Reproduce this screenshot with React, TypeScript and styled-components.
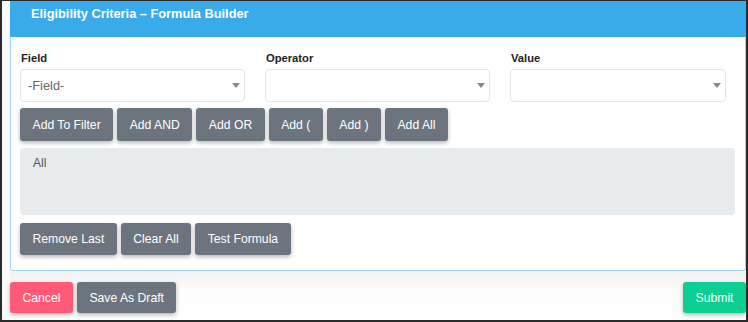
import React from "react";
import styled, { createGlobalStyle } from "styled-components";

const Global = createGlobalStyle`
  html, body { margin: 0; padding: 0; background: #fff; }
  body { font-family: "Liberation Sans", Arial, sans-serif; }
  * { box-sizing: border-box; }
`;

const Frame = styled.div`
  width: 748px;
  height: 322px;
  border: 2px solid #2a2a2a;
  border-top-width: 1px;
  background: #fafafa;
  display: flex;
  flex-direction: column;
  padding-left: 8px;
  overflow: hidden;
`;

const Card = styled.section`
  width: 736px;
  background: #fff;
  border: 1px solid #a3d4f1;
  border-top: none;
  border-radius: 0 0 3px 3px;
  display: flex;
  flex-direction: column;
`;

const Header = styled.header`
  height: 36px;
  background: #39abea;
  margin: 0 -1px;
  padding: 5px 0 0 21px;
  color: #fff;
  font-family: "Liberation Sans", Arial, sans-serif;
  font-size: 12.8px;
  font-weight: bold;
  line-height: 16px;
`;

const Body = styled.div`
  padding: 15px 9px 15px 9px;
  display: flex;
  flex-direction: column;
`;

const FieldGrid = styled.div`
  display: grid;
  grid-template-columns: 225px 225px 216px;
  column-gap: 20px;
`;

const FieldCol = styled.div`
  display: flex;
  flex-direction: column;
`;

const Label = styled.label`
  font-size: 11.2px;
  font-weight: bold;
  color: #222;
  line-height: 13px;
  height: 17px;
  padding-left: 1px;
`;

const Select = styled.div`
  height: 33px;
  border: 1px solid #e2e4e7;
  border-radius: 4px;
  background: #fff;
  display: flex;
  align-items: center;
  justify-content: space-between;
  padding: 0 4px 0 7px;
  font-size: 12.8px;
  color: #666;
`;

const Caret = styled.span`
  width: 0;
  height: 0;
  border-left: 4.5px solid transparent;
  border-right: 4.5px solid transparent;
  border-top: 5px solid #888;
`;

const ButtonRow = styled.div<{ $mt: number }>`
  display: flex;
  gap: 4px;
  margin-top: ${(p) => p.$mt}px;
`;

const Btn = styled.button<{ $variant?: "gray" | "red" | "green"; $h?: number }>`
  height: ${(p) => p.$h ?? 33}px;
  padding: 0 12.5px;
  border: none;
  border-radius: 3px;
  font-family: "Liberation Sans", Arial, sans-serif;
  font-size: 12.2px;
  color: #fff;
  background: ${(p) =>
    p.$variant === "red" ? "#ff5a78" : p.$variant === "green" ? "#0dcf93" : "#6c757d"};
  box-shadow: 0 2px 4px rgba(0, 0, 0, 0.28);
  cursor: pointer;
`;

const Formula = styled.div`
  margin-top: 7px;
  width: 715px;
  height: 67px;
  background: #e8ebee;
  border-radius: 4px;
  padding: 8px 13px;
  font-size: 12px;
  line-height: 14px;
  color: #555;
`;

const Footer = styled.footer`
  flex: 1;
  display: flex;
  justify-content: space-between;
  align-items: flex-start;
  padding: 11px 0 0 0;
  width: 736px;
  background: linear-gradient(#f2f2f2, #fcfcfc 40%, #fff);
`;

const Group = styled.div`
  display: flex;
  gap: 4px;
`;

export default function App() {
  const fields = [
    { label: "Field", value: "-Field-" },
    { label: "Operator", value: "" },
    { label: "Value", value: "" },
  ];
  return (
    <>
      <Global />
      <Frame>
        <Card>
          <Header>Eligibility Criteria – Formula Builder</Header>
          <Body>
            <FieldGrid>
              {fields.map((f) => (
                <FieldCol key={f.label}>
                  <Label>{f.label}</Label>
                  <Select>
                    <span>{f.value}</span>
                    <Caret />
                  </Select>
                </FieldCol>
              ))}
            </FieldGrid>
            <ButtonRow $mt={6}>
              {["Add To Filter", "Add AND", "Add OR", "Add (", "Add )", "Add All"].map((t) => (
                <Btn key={t}>{t}</Btn>
              ))}
            </ButtonRow>
            <Formula>All</Formula>
            <ButtonRow $mt={8}>
              {["Remove Last", "Clear All", "Test Formula"].map((t) => (
                <Btn key={t} $h={32}>{t}</Btn>
              ))}
            </ButtonRow>
          </Body>
        </Card>
        <Footer>
          <Group>
            <Btn $variant="red" $h={31}>Cancel</Btn>
            <Btn $h={31}>Save As Draft</Btn>
          </Group>
          <Btn $variant="green" $h={31}>Submit</Btn>
        </Footer>
      </Frame>
    </>
  );
}
